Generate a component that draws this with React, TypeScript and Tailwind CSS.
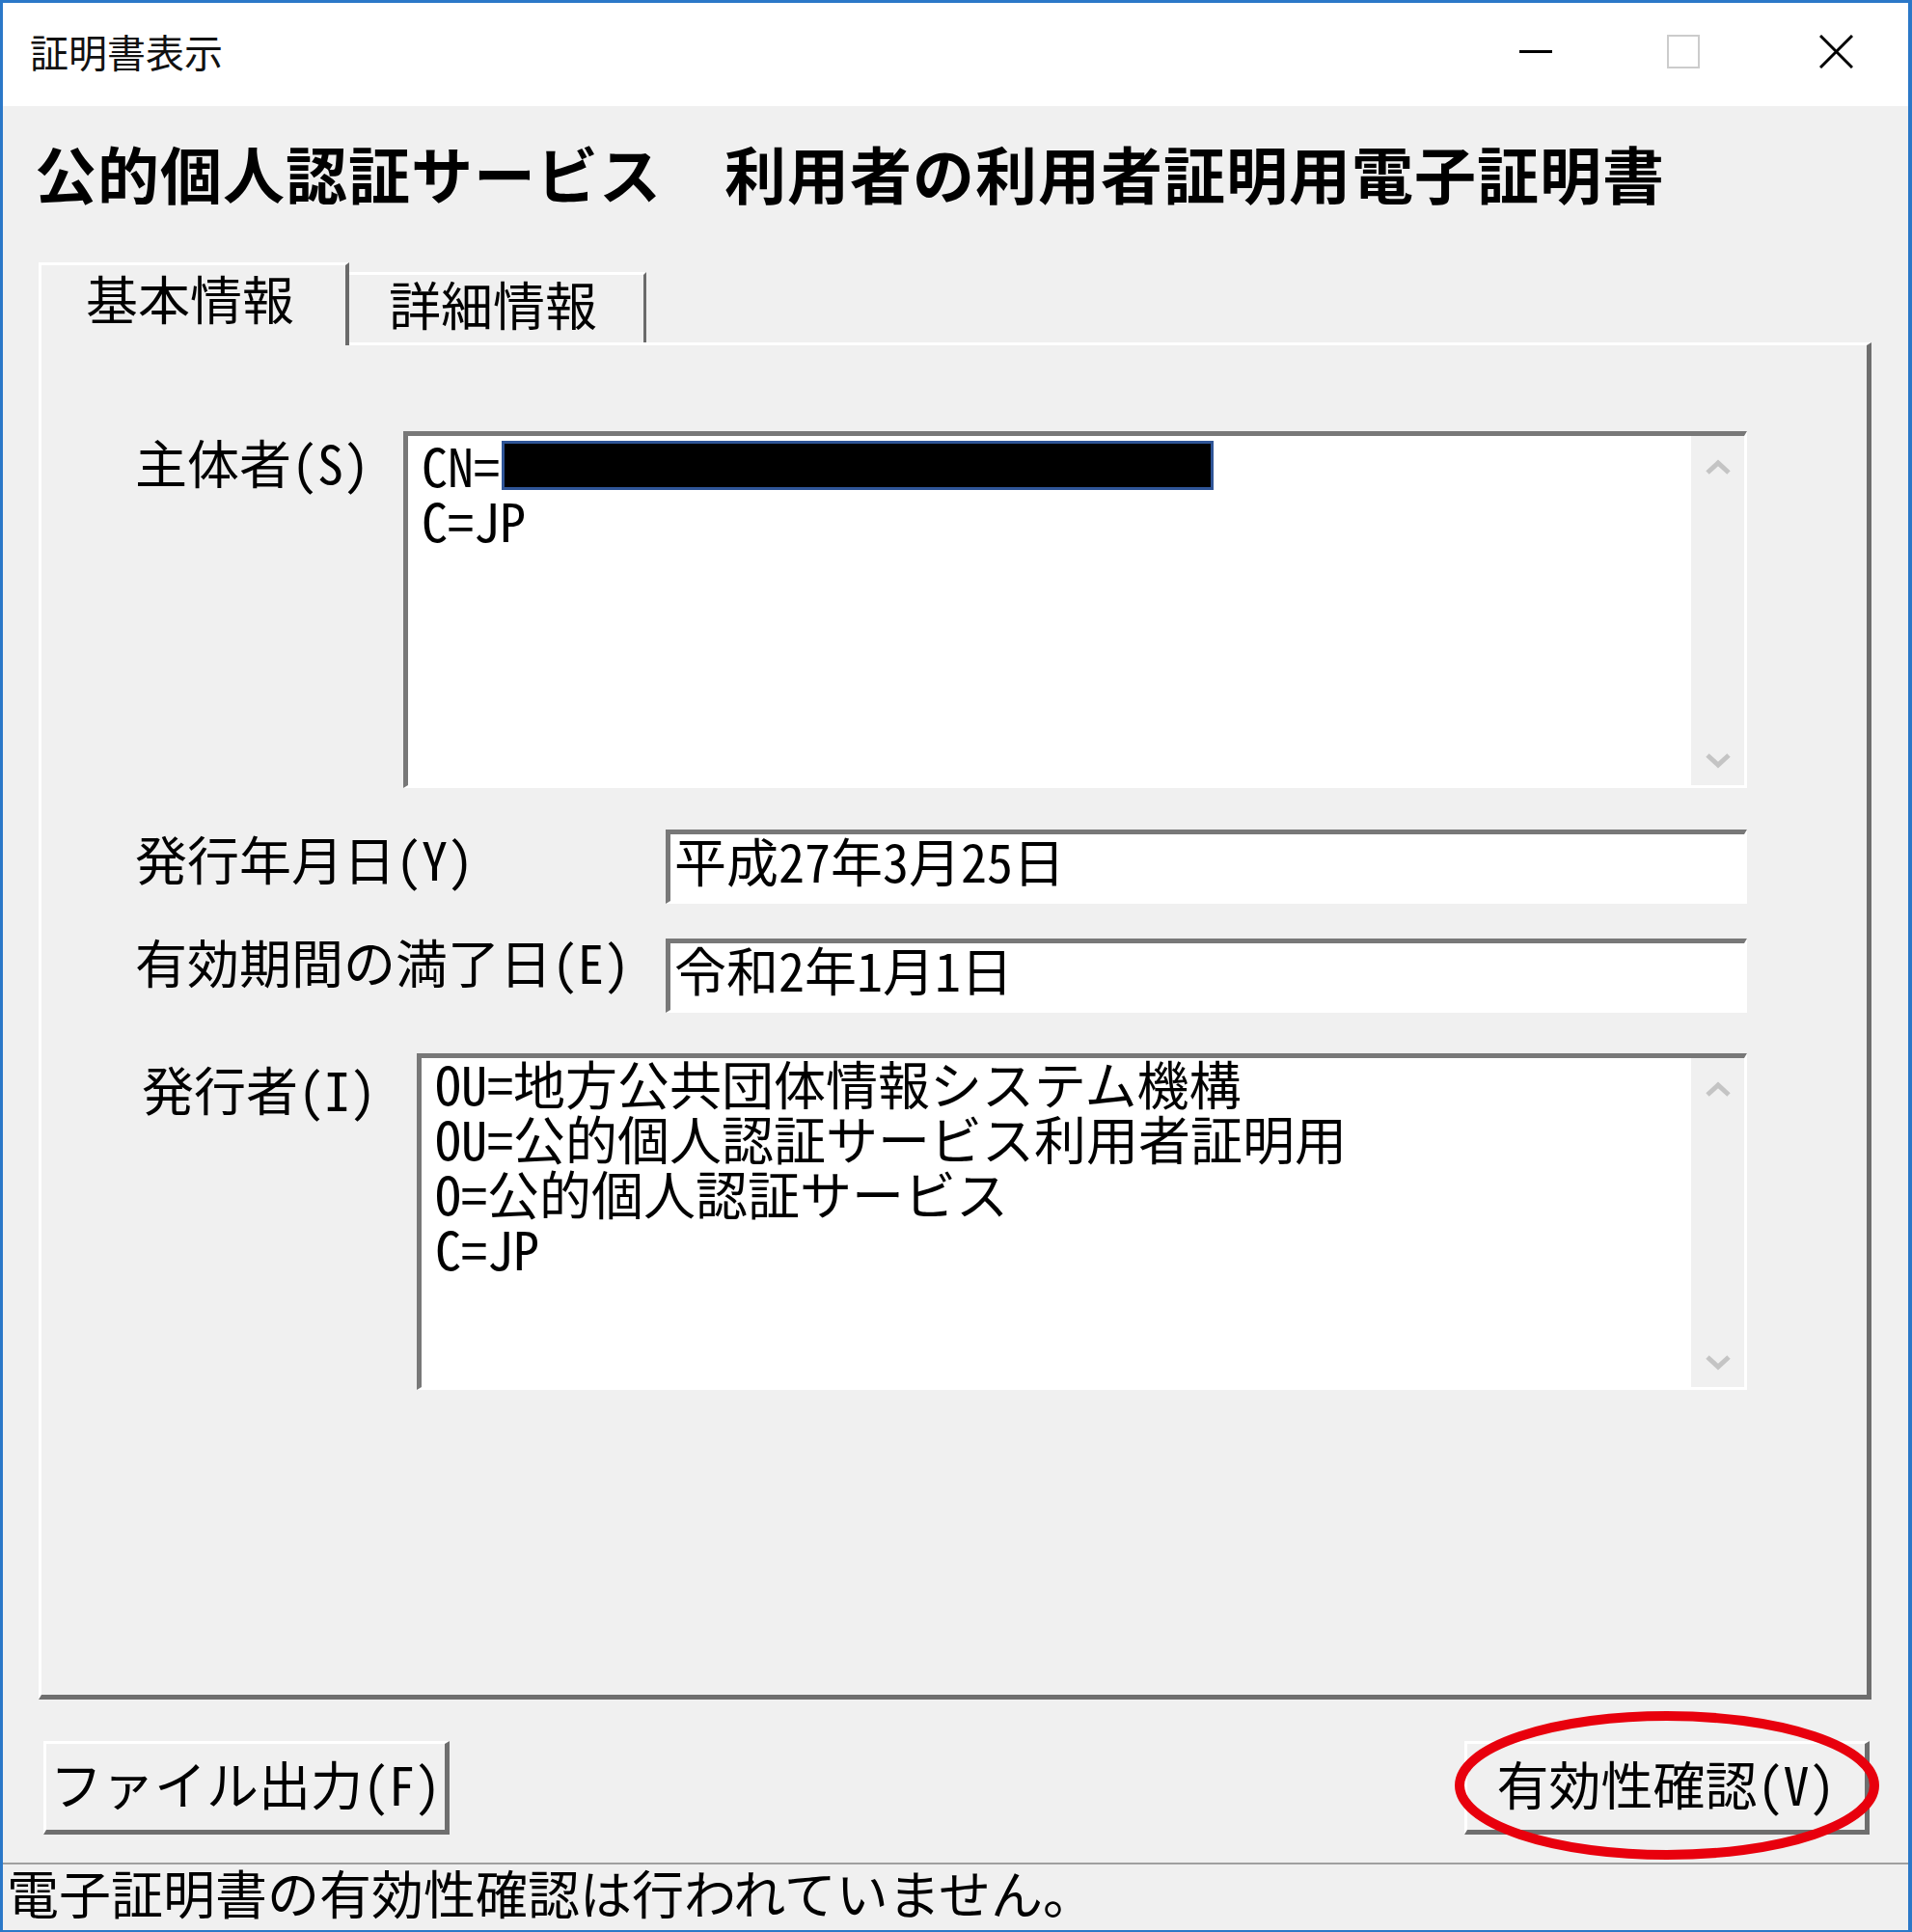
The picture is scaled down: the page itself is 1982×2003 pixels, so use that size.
import React from "react";

function Chevron({ down }: { down?: boolean }) {
  return (
    <svg width="26" height="18" viewBox="0 0 26 18" fill="none">
      <polyline
        points={down ? "2,3 13,13 24,3" : "2,15 13,5 24,15"}
        stroke="#c4c4c4"
        strokeWidth="5"
      />
    </svg>
  );
}

function ScrollBar() {
  return (
    <div className="w-[55px] h-full shrink-0 bg-[#f0f0f0] flex flex-col items-center justify-between pt-[23px] pb-[16px]">
      <Chevron />
      <Chevron down />
    </div>
  );
}

function Button({ label, w }: { label: string; w: string }) {
  return (
    <div
      className={`${w} h-[97px] bg-[#f0f0f0] border-t-[3px] border-l-[3px] border-r-[5px] border-b-[5px] border-t-white border-l-white border-r-[#6e6e6e] border-b-[#6e6e6e] flex justify-center pt-[12px] whitespace-nowrap`}
    >
      {label}
    </div>
  );
}

export default function App() {
  return (
    <div className="w-[1982px] h-[2003px] flex flex-col bg-[#f0f0f0] border-t-[3px] border-l-[3px] border-r-[4px] border-b-[2px] border-[#2b78c8] text-black font-['Noto_Sans_CJK_JP',sans-serif] [font-feature-settings:'hwid'] overflow-hidden">
      {/* title bar */}
      <div className="h-[107px] shrink-0 bg-white flex items-start">
        <div className="pl-[28px] pt-[30px] text-[40px] leading-[40px] text-[#111]">証明書表示</div>
        <div className="ml-auto mr-[57px] mt-[33px] flex items-center h-[35px]">
          <div className="w-[34px] h-[35px] flex items-center">
            <div className="w-[34px] h-[3px] bg-black" />
          </div>
          <div className="ml-[119px] w-[34px] h-[35px] border-2 border-[#cccccc]" />
          <svg className="ml-[124px]" width="35" height="35" viewBox="0 0 35 35">
            <path d="M1 1 L34 34 M34 1 L1 34" stroke="#000" strokeWidth="3" />
          </svg>
        </div>
      </div>

      {/* heading */}
      <h1 className="mt-[36px] pl-[33px] text-[64px] leading-[64px] font-bold tracking-[1px] whitespace-nowrap shrink-0 [font-feature-settings:normal]">
        公的個人認証サービス　利用者の利用者証明用電子証明書
      </h1>

      {/* tabs */}
      <div className="mt-[62px] ml-[37px] flex items-end mb-[-3px] relative z-10 shrink-0 text-[54px] leading-[57px]">
        <div className="w-[322px] h-[86px] bg-[#f0f0f0] border-t-[3px] border-l-[3px] border-r-[4px] border-t-white border-l-white border-r-[#6a6a6a] pt-[5px] pl-[46px]">
          基本情報
        </div>
        <div className="w-[308px] h-[73px] mb-[3px] bg-[#f0f0f0] border-t-[3px] border-r-[3px] border-t-white border-r-[#6a6a6a] pt-[1px] pl-[41px]">
          詳細情報
        </div>
      </div>

      {/* tab panel */}
      <div className="ml-[37px] w-[1900px] h-[1407px] shrink-0 border-t-[3px] border-l-[3px] border-r-[5px] border-b-[5px] border-t-white border-l-white border-r-[#6e6e6e] border-b-[#6e6e6e] flex flex-col text-[54px] leading-[57px]">
        {/* subject */}
        <div className="mt-[89px] flex">
          <div className="w-[375px] shrink-0 pl-[97px] mt-[3px]">主体者(S)</div>
          <div className="w-[1393px] h-[370px] bg-white border-t-[5px] border-l-[5px] border-r-[3px] border-b-[3px] border-t-[#787878] border-l-[#787878] border-r-white border-b-white flex">
            <div className="flex-1 pt-[1px] pl-[14px]">
              <div className="flex items-start">
                <span>CN=</span>
                <span className="ml-[2px] mt-[4px] w-[738px] h-[51px] bg-black border-[3px] border-[#2f5597]" />
              </div>
              <div>C=JP</div>
            </div>
            <ScrollBar />
          </div>
        </div>

        {/* issue date */}
        <div className="mt-[43px] flex">
          <div className="w-[647px] shrink-0 pl-[97px] mt-[1px]">発行年月日(Y)</div>
          <div className="w-[1121px] h-[77px] bg-white border-t-[5px] border-l-[5px] border-r-[3px] border-b-[3px] border-t-[#787878] border-l-[#787878] border-r-white border-b-white pl-[4px]">
            <div className="mt-[-2px]">平成27年3月25日</div>
          </div>
        </div>

        {/* expiry date */}
        <div className="mt-[36px] flex">
          <div className="w-[647px] shrink-0 pl-[97px] mt-[-5px]">有効期間の満了日(E)</div>
          <div className="w-[1121px] h-[77px] bg-white border-t-[5px] border-l-[5px] border-r-[3px] border-b-[3px] border-t-[#787878] border-l-[#787878] border-r-white border-b-white pl-[4px]">
            <div className="mt-[-2px]">令和2年1月1日</div>
          </div>
        </div>

        {/* issuer */}
        <div className="mt-[42px] flex">
          <div className="w-[389px] shrink-0 pl-[104px] mt-[8px]">発行者(I)</div>
          <div className="w-[1379px] h-[349px] bg-white border-t-[5px] border-l-[5px] border-r-[3px] border-b-[3px] border-t-[#787878] border-l-[#787878] border-r-white border-b-white flex">
            <div className="flex-1 mt-[-3px] pl-[14px] whitespace-nowrap">
              <div>OU=地方公共団体情報システム機構</div>
              <div>OU=公的個人認証サービス利用者証明用</div>
              <div>O=公的個人認証サービス</div>
              <div>C=JP</div>
            </div>
            <ScrollBar />
          </div>
        </div>
      </div>

      {/* buttons */}
      <div className="mt-[43px] flex justify-between pl-[42px] pr-[40px] shrink-0 text-[54px] leading-[57px]">
        <Button label="ファイル出力(F)" w="w-[421px]" />
        <div className="relative">
          <Button label="有効性確認(V)" w="w-[420px]" />
          <svg
            className="absolute left-[-11px] top-[-32px] pointer-events-none"
            width="442"
            height="156"
            viewBox="0 0 442 156"
          >
            <ellipse cx="221" cy="78" rx="215" ry="72" fill="none" stroke="#e8000d" strokeWidth="10" />
          </svg>
        </div>
      </div>

      {/* status bar */}
      <div className="mt-[29px] h-[70px] shrink-0 border-t-[2px] border-t-[#a0a0a0] pl-[4px] text-[54px] leading-[57px] whitespace-nowrap">
        電子証明書の有効性確認は行われていません。
      </div>
    </div>
  );
}
